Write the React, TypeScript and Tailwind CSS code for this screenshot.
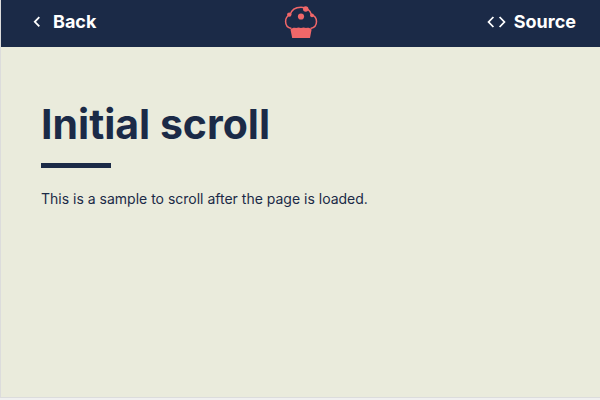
function BackIcon() {
  return (
    <svg width="8" height="12" viewBox="0 0 8 12" fill="none" stroke="currentColor" strokeWidth="1.8" aria-hidden="true">
      <path d="M6.3 1.2 1.8 5.8l4.5 4.6" />
    </svg>
  );
}

function SourceIcon() {
  return (
    <svg width="19" height="12" viewBox="0 0 19 12" fill="none" stroke="currentColor" strokeWidth="1.8" aria-hidden="true">
      <path d="M6.400 1 1.600 6l4.800 5M12.600 1l4.800 5-4.800 5" />
    </svg>
  );
}

function MuffinLogo() {
  return (
    <svg width="34" height="34" viewBox="0 0 34 34" fill="#f16769" role="img" aria-label="Muffin">
      <path
        d="M7.500 23.600C3.800 23 1.600 20 1.600 16.600c0-3.200 1.700-5.800 4.400-6.700C7.400 5 11.800 2.200 17 2.200c5 0 9 2.900 10.500 7.500 3 1 5 3.700 5 6.900 0 3.600-2.400 6.400-6 7"
        fill="none"
        stroke="#f16769"
        strokeWidth="1.500"
      />
      <path d="M6.500 24.500c1.500-1.700 3.800-2.200 5.500-1.500 1.700-.8 3.500-.8 5 0 1.600-.8 3.500-.8 5.100 0 1.800-.7 4.100-.2 5.500 1.500L26 33H8.200z" />
      <circle cx="17" cy="11.500" r="3.100" />
      <circle cx="21.700" cy="4" r="2.700" />
      <circle cx="5.300" cy="9.600" r="2.200" />
      <circle cx="28" cy="10.300" r="1.900" />
    </svg>
  );
}

export default function App() {
  return (
    <div className="flex min-h-screen flex-col bg-[#f0f0f0] pb-0.5 font-['Inter',sans-serif] text-[#1b2a47]">
      <div className="flex grow flex-col border-b border-l border-[#dcdcdc] bg-[#eaebdc]">
        <header className="grid h-[47px] grid-cols-[1fr_auto_1fr] items-center bg-[#1b2a47] px-6 pb-1 text-lg font-bold text-white">
          <a href="#back" className="flex items-center gap-3 justify-self-start pl-2">
            <BackIcon />
            Back
          </a>
          <MuffinLogo />
          <a href="#source" className="flex items-center gap-2 justify-self-end">
            <SourceIcon />
            Source
          </a>
        </header>
        <main className="px-10 pt-[50px]">
          <h1 className="text-[41px] leading-[54px] font-bold">Initial scroll</h1>
          <div className="mt-3 h-[5px] w-[70px] bg-[#1b2a47]" />
          <p className="mt-5 text-sm leading-[22px]">This is a sample to scroll after the page is loaded.</p>
        </main>
      </div>
    </div>
  );
}
